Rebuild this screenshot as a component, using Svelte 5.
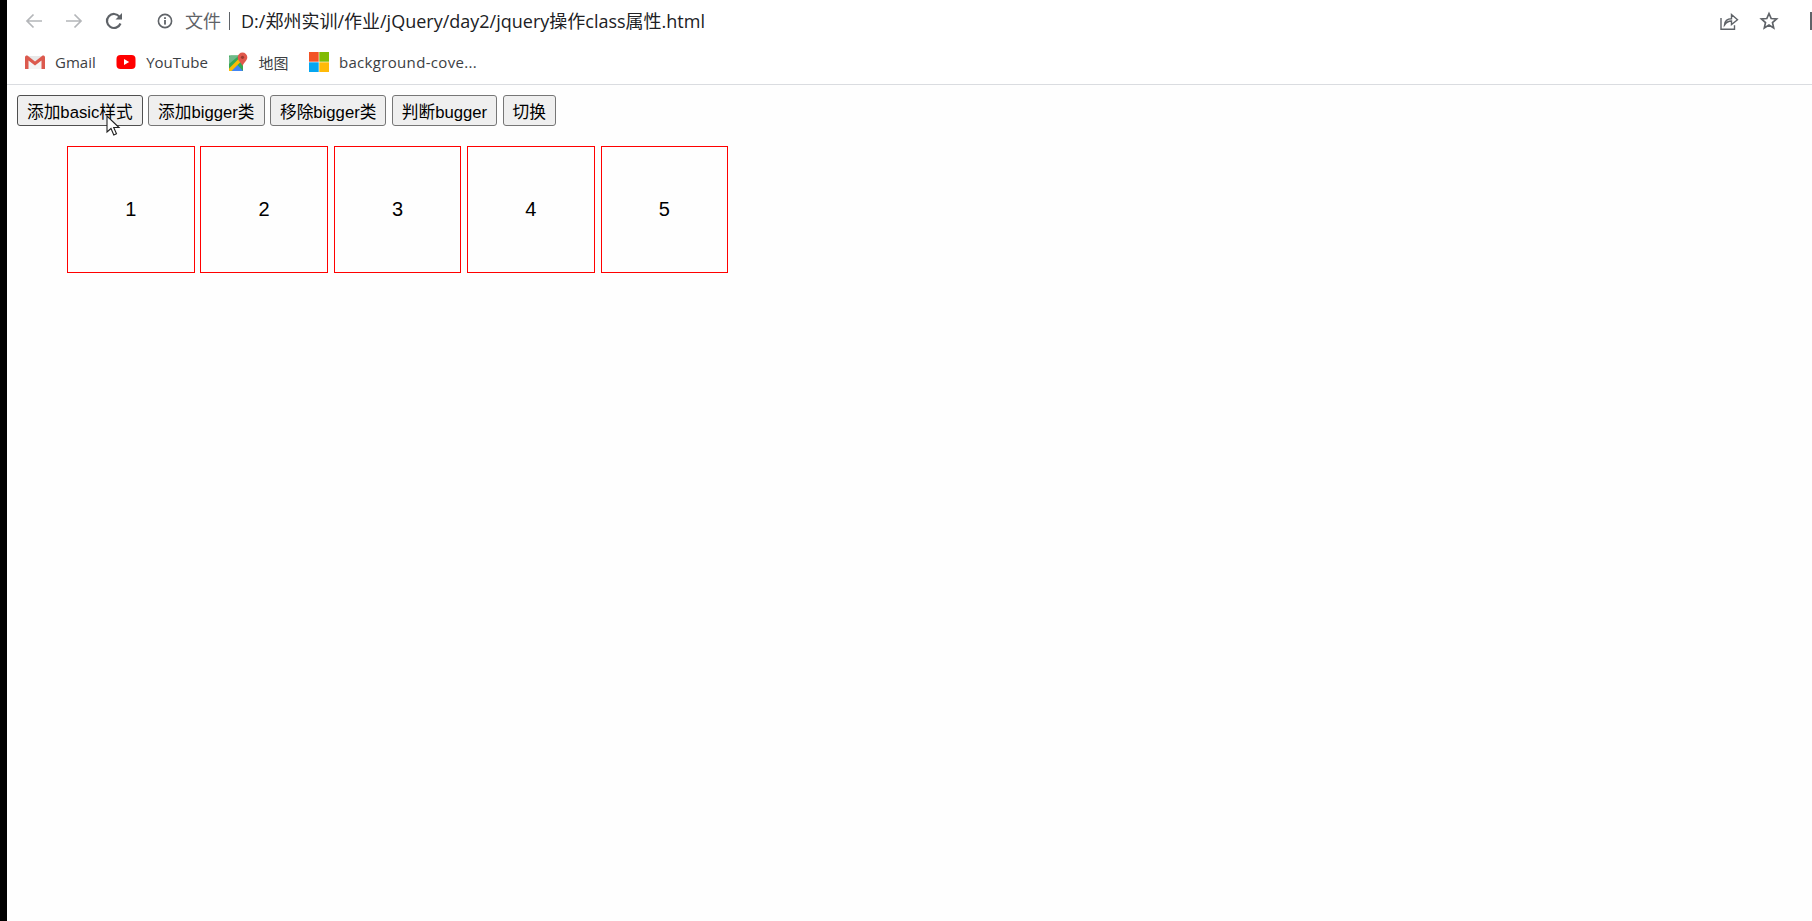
<script>
  const bookmarks = [
    { name: 'Gmail', icon: 'gmail' },
    { name: 'YouTube', icon: 'youtube' },
    { name: '地图', icon: 'maps' },
    { name: 'background-cove...', icon: 'ms' }
  ];
  const buttons = ['添加basic样式', '添加bigger类', '移除bigger类', '判断bugger', '切换'];
  const boxes = [1, 2, 3, 4, 5];
</script>

<div class="screen">
  <div class="edge"></div>
  <div class="window">
    <header class="chrome">
      <div class="toolbar">
        <button class="nav" aria-label="back">
          <svg width="20" height="20" viewBox="0 0 20 20" fill="none" stroke="#b4b6b9" stroke-width="1.7"><path d="M18 10H3M9.5 3.5 3 10l6.5 6.5"/></svg>
        </button>
        <button class="nav" aria-label="forward">
          <svg width="20" height="20" viewBox="0 0 20 20" fill="none" stroke="#b4b6b9" stroke-width="1.7"><path d="M2 10h15M10.5 3.5 17 10l-6.5 6.5"/></svg>
        </button>
        <button class="nav" aria-label="reload">
          <svg width="20" height="20" viewBox="0 0 20 20" fill="none" stroke="#5f6368" stroke-width="2.200"><path d="M16.500 12.500A7 7 0 1 1 15.600 5.800"/><path d="M18 2v6.500h-6.500" fill="#5f6368" stroke="none"/></svg>
        </button>
        <div class="address">
          <svg class="info" width="16" height="16" viewBox="0 0 16 16"><circle cx="8" cy="8" r="6.6" fill="none" stroke="#5f6368" stroke-width="1.6"/><rect x="7.1" y="7" width="1.8" height="4.6" fill="#5f6368"/><rect x="7.1" y="4.2" width="1.8" height="1.8" fill="#5f6368"/></svg>
          <span class="scheme">文件</span>
          <span class="sep"></span>
          <span class="url">D:/郑州实训/作业/jQuery/day2/jquery操作class属性.html</span>
        </div>
        <div class="actions">
          <svg width="20" height="20" viewBox="0 0 20 20" fill="none" stroke="#5f6368" stroke-width="1.4"><path d="M2 7v11.300h13.500v-4"/><path d="M5.500 14c.3-4 3-6.300 7-6.300V3.500l6 5.200-6 4.800v-3.500c-3 0-5 1-7 4Z"/></svg>
          <svg width="20" height="20" viewBox="0 0 20 20" fill="none" stroke="#5f6368" stroke-width="1.700"><path d="m10 2.500 2.200 5 5.400.5-4.100 3.600 1.200 5.300L10 14.100l-4.700 2.800 1.200-5.300L2.400 8l5.400-.5Z"/></svg>
          <span class="cut"></span>
        </div>
      </div>
      <nav class="bookmarks">
        {#each bookmarks as b}
          <span class="bookmark">
            {#if b.icon === 'gmail'}
              <svg width="20" height="20" viewBox="0 0 20 20"><path d="M2 4h16v13H2Z" fill="#e8e8e8"/><path d="M3 17V6.500L10 12l7-5.500V17" fill="#f4f4f4"/><path d="M0 5.500C0 3.500 2 3 3 4l7 5.500L17 4c1-1 3-.500 3 1.500V17h-3.500V8.500L10 13.500 3.500 8.500V17H0Z" fill="#dc5a4e"/></svg>
            {:else if b.icon === 'youtube'}
              <svg width="20" height="20" viewBox="0 0 20 20"><rect x="0.500" y="3" width="19" height="14" rx="4" fill="#f00"/><path d="m8 7 5.200 3L8 13Z" fill="#fff"/></svg>
            {:else if b.icon === 'maps'}
              <svg width="20" height="20" viewBox="0 0 20 20"><path d="M1 3.500h14V19H1Z" fill="#34a853"/><path d="M3 19 9 12.500 15 19Z" fill="#4285f4"/><path d="M1 16.500 11.500 6 14 8.500 3.500 19H1Z" fill="#fbbc04"/><path d="M3 3.500h8L1 12V5Z" fill="#6fb98a"/><path d="M14.500 0.500a4.800 4.800 0 0 1 4.800 4.800c0 3.200-3.300 5-4.800 8.700-1.500-3.700-4.800-5.500-4.800-8.700a4.800 4.800 0 0 1 4.800-4.800Z" fill="#e0584c"/><circle cx="14.500" cy="5.300" r="1.600" fill="#9c3a30"/></svg>
            {:else}
              <svg class="ms" width="20" height="20" viewBox="0 0 20 20"><rect width="9.700" height="9.700" fill="#f25325"/><rect x="10.300" width="9.700" height="9.700" fill="#80bb03"/><rect y="10.300" width="9.700" height="9.700" fill="#05a6f0"/><rect x="10.300" y="10.300" width="9.700" height="9.700" fill="#ffba08"/></svg>
            {/if}
            <span class="bookmark-name">{b.name}</span>
          </span>
        {/each}
      </nav>
    </header>

    <main class="page">
      <div class="controls">
        {#each buttons as label}
          <button class="ctrl">{label}</button>
        {/each}
      </div>
      <div class="boxes">
        {#each boxes as n}
          <div class="box">{n}</div>
        {/each}
      </div>
      <svg class="cursor" width="15" height="22" viewBox="0 0 15 22"><path d="M1 1v16l4-3.500 2.800 6.500 2.700-1.200-2.800-6.300H13Z" fill="#fff" stroke="#222" stroke-width="1.100"/></svg>
    </main>
  </div>
</div>

<style>
  :global(body) {
    margin: 0;
    background: #fff;
  }

  .screen {
    display: flex;
    height: 921px;
    overflow: hidden;
  }

  .edge {
    width: 7px;
    flex: none;
    background: #000;
  }

  .window {
    flex: 1;
    min-width: 0;
    display: flex;
    flex-direction: column;
  }

  .chrome {
    height: 85px;
    flex: none;
    box-sizing: border-box;
    border-bottom: 1px solid #dadce0;
    font-family: "Open Sans", "Noto Sans CJK SC", sans-serif;
  }

  .toolbar {
    height: 41px;
    display: flex;
    align-items: center;
    padding-left: 17px;
    color: #202124;
  }

  .nav {
    width: 20px;
    height: 20px;
    padding: 0;
    margin-right: 20px;
    border: 0;
    background: none;
    display: flex;
  }

  .address {
    flex: 1;
    display: flex;
    align-items: center;
    margin-left: 13px;
  }

  .info {
    margin-right: 12px;
  }

  .scheme {
    font-size: 18px;
    color: #5f6368;
    margin-top: -2px;
  }

  .sep {
    width: 1px;
    height: 18px;
    margin: 0 11px 0 8px;
    background: #5f6368;
  }

  .url {
    font-size: 18px;
    margin-top: -2px;
  }

  .actions {
    display: flex;
    align-items: center;
    gap: 20px;
  }

  .cut {
    width: 2px;
    height: 18px;
    margin-left: 11px;
    background: #5f6368;
  }

  .bookmarks {
    display: flex;
    align-items: center;
    height: 42px;
    padding-left: 18px;
    gap: 20.500px;
  }

  .bookmark {
    display: flex;
    align-items: center;
    gap: 10px;
    font-size: 15px;
    color: #3c4043;
  }

  .bookmark:last-child {
    letter-spacing: 0.330px;
  }

  .page {
    position: relative;
    flex: 1;
    padding: 10px 10px 0;
    font-family: "Liberation Sans", "Noto Sans CJK SC", sans-serif;
    background: #fefefe;
  }

  .controls {
    display: flex;
    gap: 5.400px;
  }

  .ctrl {
    height: 31px;
    padding: 0 9px;
    box-sizing: border-box;
    border: 1px solid #767676;
    border-radius: 3px;
    background: #efefef;
    color: #000;
    font: 16.700px "Liberation Sans", "Noto Sans CJK SC", sans-serif;
  }

  .ctrl:first-child {
    border-color: #4f4f4f;
  }

  .boxes {
    display: flex;
    gap: 5.900px;
    margin: 20px 0 0 50px;
  }

  .box {
    width: 127.500px;
    height: 127px;
    box-sizing: border-box;
    border: 1px solid #f00;
    display: flex;
    align-items: center;
    justify-content: center;
    font-size: 20px;
    color: #000;
  }

  /* mouse pointer caught by the capture */
  .cursor {
    position: absolute;
    left: 99px;
    top: 30px;
  }
</style>
